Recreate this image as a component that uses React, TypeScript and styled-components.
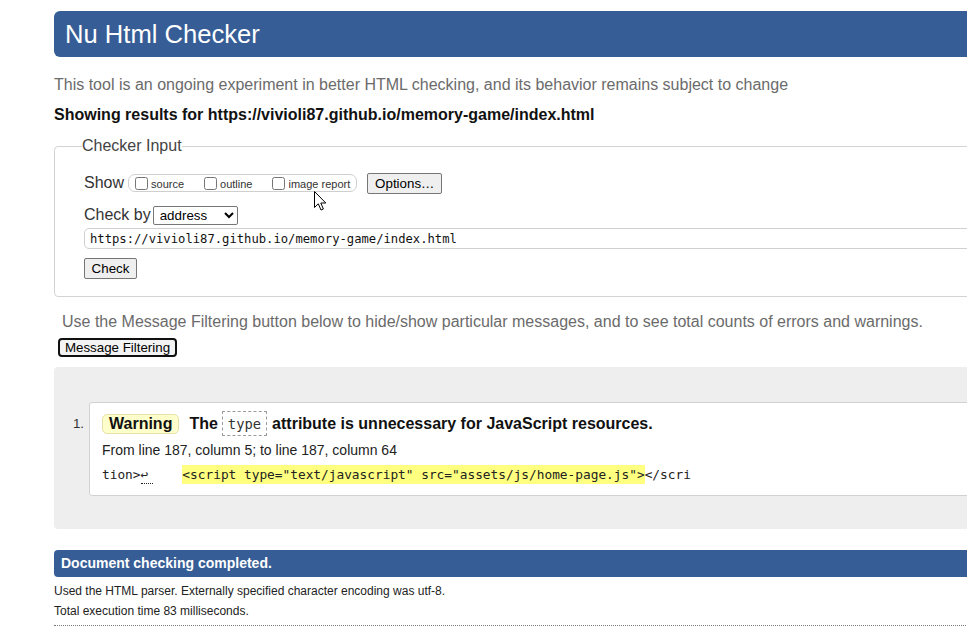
import React from "react";
import styled, { createGlobalStyle } from "styled-components";

const Global = createGlobalStyle`
  html, body { margin: 0; padding: 0; background: #fff; overflow: hidden; }
  body { font-family: "Liberation Sans", Arial, sans-serif; color: #000; }
  * { box-sizing: border-box; }
`;

const BLUE = "#365d95";
const MONO = `"DejaVu Sans Mono", "Liberation Mono", monospace`;

const Page = styled.div`
  position: relative;
  width: 1160px;
  padding: 11px 0 0 54px;
`;

const Header = styled.h1`
  margin: 0;
  height: 46px;
  line-height: 46px;
  padding-left: 11px;
  background: ${BLUE};
  color: #fff;
  font-size: 25.6px;
  font-weight: normal;
  border-radius: 6px;
`;

const Intro = styled.p<{ $indent?: number; $top: number }>`
  margin: ${(p) => p.$top}px 0 0;
  line-height: 20px;
  font-size: 16px;
  color: #6b6b6b;
  padding-left: ${(p) => p.$indent ?? 0}px;
`;

const Showing = styled.p`
  margin: 10px 0 0;
  line-height: 20px;
  font-size: 16px;
  font-weight: bold;
  color: #111;
`;

const Fieldset = styled.fieldset`
  margin: 11px 0 0;
  padding: 0 0 17px 29px;
  border: 1px solid #d3d3d3;
  border-radius: 4px;
  min-width: 0;
`;

const Legend = styled.legend`
  padding: 0;
  margin-left: -2px;
  line-height: 20px;
  font-size: 16px;
  color: #444;
`;

const Row = styled.div<{ $top: number }>`
  display: flex;
  align-items: center;
  height: 22px;
  margin-top: ${(p) => p.$top}px;
  font-size: 16px;
  color: #333;
`;

const RowLabel = styled.span<{ $gap: number }>`
  margin-right: ${(p) => p.$gap}px;
`;

const CheckGroup = styled.div`
  display: flex;
  align-items: center;
  height: 18px;
  padding: 0 6px;
  border: 1px solid #cfcfcf;
  border-radius: 7px;
  margin-right: 10px;
`;

const CheckItem = styled.label<{ $last?: boolean }>`
  display: flex;
  align-items: center;
  margin-right: ${(p) => (p.$last ? 0 : 20)}px;
  font-size: 11px;
  color: #333;
  white-space: nowrap;
`;

const Box = styled.input`
  width: 13px;
  height: 13px;
  margin: 0 3px 0 0;
`;

const CheckText = styled.span`
  position: relative;
  top: 1px;
`;

const NativeButton = styled.button<{ $w: number; $h: number }>`
  width: ${(p) => p.$w}px;
  height: ${(p) => p.$h}px;
  padding: 0 6px;
  font-family: "Liberation Sans", Arial, sans-serif;
  font-size: 13.33px;
  color: #000;
  background: #efefef;
  border: 1px solid #767676;
  border-radius: 2px;
`;

const Select = styled.select`
  width: 85px;
  height: 19px;
  font-family: "Liberation Sans", Arial, sans-serif;
  font-size: 13.33px;
  color: #000;
  background: #fff;
  border: 1px solid #767676;
  border-radius: 2px;
  padding: 0 0 0 2px;
`;

const UrlInput = styled.input`
  display: block;
  width: 100%;
  height: 21px;
  margin-top: 2px;
  padding: 0 5px;
  font-family: ${MONO};
  font-size: 12.2px;
  color: #111;
  border: 1px solid #d0d0d0;
  border-radius: 5px;
  background: #fff;
`;

const CheckButtonWrap = styled.div`
  margin-top: 9px;
  height: 21px;
`;

const FilterButton = styled.button`
  display: block;
  margin: 6px 0 0 4px;
  width: 119px;
  height: 19px;
  padding: 0;
  font-family: "Liberation Sans", Arial, sans-serif;
  font-size: 13.33px;
  color: #000;
  background: #f3f3f3;
  border: 2px solid #101010;
  border-radius: 4px;
`;

const Results = styled.div`
  margin-top: 10px;
  padding: 35px 0 33px 0;
  background: #eeeeee;
  border-radius: 4px;
`;

const MessageList = styled.ol`
  list-style: none;
  margin: 0;
  padding: 0;
`;

const MessageRow = styled.li`
  display: flex;
  align-items: flex-start;
`;

const Num = styled.span`
  width: 30px;
  margin: 12px 5px 0 0;
  text-align: right;
  line-height: 20px;
  font-size: 13.33px;
  color: #333;
`;

const Card = styled.div`
  flex: 1;
  background: #fff;
  border: 1px solid #d2d2d2;
  border-radius: 3px;
  padding: 8px 0 10px 12px;
`;

const Title = styled.div`
  display: flex;
  align-items: center;
  height: 25px;
  font-size: 16px;
  font-weight: bold;
  color: #111;
  white-space: pre;
`;

const Badge = styled.span`
  display: inline-flex;
  align-items: center;
  height: 20px;
  padding: 0 6px;
  margin-right: 10px;
  background: #ffffcc;
  border: 1px solid #e6e0aa;
  border-radius: 5px;
  color: #111;
`;

const Code = styled.code`
  display: inline-flex;
  align-items: center;
  height: 25px;
  margin: 0 5px 0 4px;
  padding: 0 5px;
  border: 1px dashed #9a9a9a;
  font-family: ${MONO};
  font-weight: normal;
  font-size: 13.8px;
  color: #333;
`;

const Location = styled.p`
  margin: 4px 0 0;
  line-height: 20px;
  font-size: 14px;
  color: #222;
`;

const Extract = styled.p`
  margin: 5px 0 0;
  line-height: 20px;
  font-family: ${MONO};
  font-size: 12.8px;
  color: #222;
  white-space: pre;
`;

const LineFeed = styled.span`
  display: inline-block;
  width: 12px;
  line-height: 16px;
  border-bottom: 1px dotted #222;
`;

const Mark = styled.mark`
  background: #ffff80;
  color: #222;
  padding: 2px 0;
  margin-left: -1px;
`;

const DoneBar = styled.h2`
  margin: 21px 0 0;
  height: 27px;
  line-height: 27px;
  padding-left: 7px;
  background: ${BLUE};
  color: #fff;
  font-size: 14px;
  font-weight: bold;
  border-radius: 4px;
`;

const Details = styled.p<{ $first?: boolean }>`
  margin: ${(p) => (p.$first ? 4 : 0)}px 0 0;
  line-height: 20px;
  font-size: 12px;
  color: #222;
`;

const Rule = styled.hr`
  margin: 4px 0 0;
  border: 0;
  border-top: 1px dotted #7a7a7a;
`;

const Cursor = styled.svg`
  position: absolute;
  left: 314px;
  top: 191px;
  pointer-events: none;
`;

export default function App() {
  return (
    <>
      <Global />
      <Page>
        <Header>Nu Html Checker</Header>
        <Intro $top={18}>This tool is an ongoing experiment in better HTML checking, and its behavior remains subject to change</Intro>
        <Showing>Showing results for https://vivioli87.github.io/memory-game/index.html</Showing>

        <Fieldset>
          <Legend>Checker Input</Legend>
          <Row $top={16}>
            <RowLabel $gap={4}>Show</RowLabel>
            <CheckGroup>
              <CheckItem>
                <Box type="checkbox" />
                <CheckText>source</CheckText>
              </CheckItem>
              <CheckItem>
                <Box type="checkbox" />
                <CheckText>outline</CheckText>
              </CheckItem>
              <CheckItem $last>
                <Box type="checkbox" />
                <CheckText>image report</CheckText>
              </CheckItem>
            </CheckGroup>
            <NativeButton $w={75} $h={21}>Options…</NativeButton>
          </Row>
          <Row $top={10}>
            <RowLabel $gap={2}>Check by</RowLabel>
            <Select defaultValue="address">
              <option value="address">address</option>
              <option value="file">file upload</option>
              <option value="text">text input</option>
            </Select>
          </Row>
          <UrlInput readOnly value="https://vivioli87.github.io/memory-game/index.html" />
          <CheckButtonWrap>
            <NativeButton $w={53} $h={21}>Check</NativeButton>
          </CheckButtonWrap>
        </Fieldset>

        <Intro $indent={8} $top={15}>
          Use the Message Filtering button below to hide/show particular messages, and to see total counts of errors and warnings.
        </Intro>
        <FilterButton>Message Filtering</FilterButton>

        <Results>
          <MessageList>
            <MessageRow>
              <Num>1.</Num>
              <Card>
                <Title>
                  <Badge>Warning</Badge>
                  <span>The</span>
                  <Code>type</Code>
                  <span>attribute is unnecessary for JavaScript resources.</span>
                </Title>
                <Location>From line 187, column 5; to line 187, column 64</Location>
                <Extract>
                  tion&gt;<LineFeed>↩</LineFeed>{"    "}
                  <Mark>&lt;script type="text/javascript" src="assets/js/home-page.js"&gt;</Mark>&lt;/scri
                </Extract>
              </Card>
            </MessageRow>
          </MessageList>
        </Results>

        <DoneBar>Document checking completed.</DoneBar>
        <Details $first>Used the HTML parser. Externally specified character encoding was utf-8.</Details>
        <Details>Total execution time 83 milliseconds.</Details>
        <Rule />

        <Cursor width="13" height="21" viewBox="0 0 13 21">
          <path
            d="M0.5 0.5 L0.5 16.5 L4.3 12.8 L7 19 L9.4 18 L6.8 12 L11.8 12 Z"
            fill="#fff"
            stroke="#000"
            strokeWidth="1"
            strokeLinejoin="round"
          />
        </Cursor>
      </Page>
    </>
  );
}
